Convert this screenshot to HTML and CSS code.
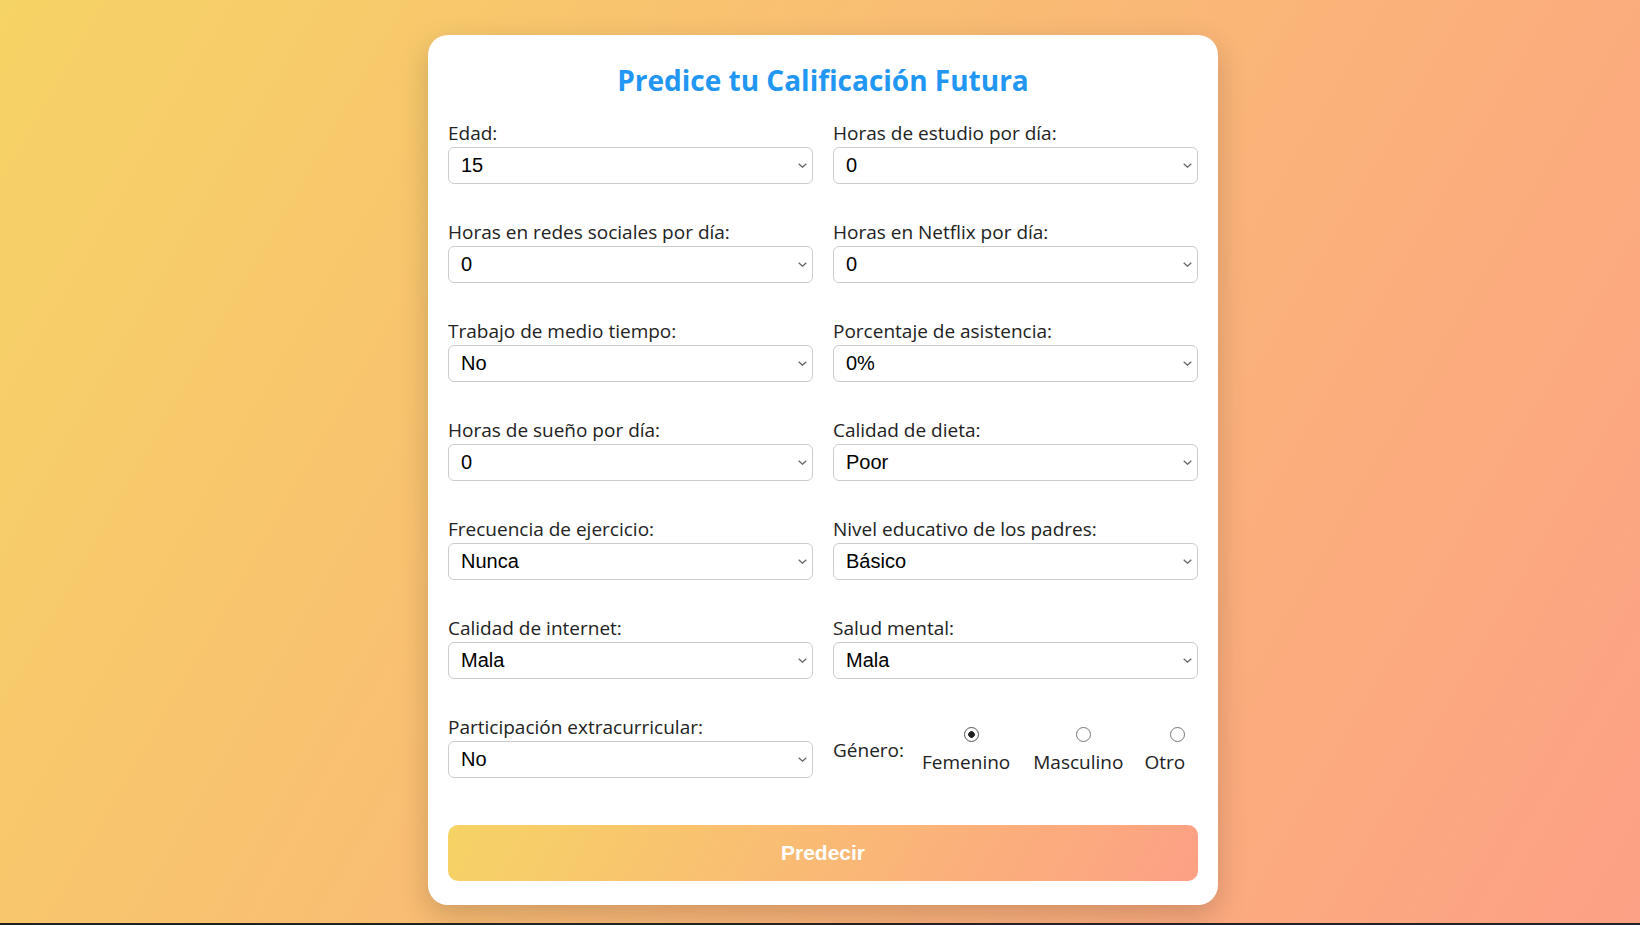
FILE: index.html
```html
<!DOCTYPE html>
<html lang="es">
<head>
<meta charset="utf-8">
<title>Predice tu Calificación Futura</title>
<link rel="stylesheet" href="styles.css">
</head>
<body>
<div class="page">
  <form class="card">
    <h1 class="title">Predice tu Calificación Futura</h1>
    <div class="grid">
      <div class="field">
        <label class="lbl" for="edad">Edad:</label>
        <select id="edad" class="sel"><option>15</option><option>16</option><option>17</option><option>18</option><option>19</option><option>20</option></select>
      </div>
      <div class="field">
        <label class="lbl" for="estudio">Horas de estudio por día:</label>
        <select id="estudio" class="sel"><option>0</option><option>1</option><option>2</option><option>3</option></select>
      </div>
      <div class="field">
        <label class="lbl" for="redes">Horas en redes sociales por día:</label>
        <select id="redes" class="sel"><option>0</option><option>1</option><option>2</option></select>
      </div>
      <div class="field">
        <label class="lbl" for="netflix">Horas en Netflix por día:</label>
        <select id="netflix" class="sel"><option>0</option><option>1</option><option>2</option></select>
      </div>
      <div class="field">
        <label class="lbl" for="trabajo">Trabajo de medio tiempo:</label>
        <select id="trabajo" class="sel"><option>No</option><option>Sí</option></select>
      </div>
      <div class="field">
        <label class="lbl" for="asistencia">Porcentaje de asistencia:</label>
        <select id="asistencia" class="sel"><option>0%</option><option>50%</option><option>100%</option></select>
      </div>
      <div class="field">
        <label class="lbl" for="sueno">Horas de sueño por día:</label>
        <select id="sueno" class="sel"><option>0</option><option>4</option><option>8</option></select>
      </div>
      <div class="field">
        <label class="lbl" for="dieta">Calidad de dieta:</label>
        <select id="dieta" class="sel"><option>Poor</option><option>Fair</option><option>Good</option></select>
      </div>
      <div class="field">
        <label class="lbl" for="ejercicio">Frecuencia de ejercicio:</label>
        <select id="ejercicio" class="sel"><option>Nunca</option><option>A veces</option><option>Siempre</option></select>
      </div>
      <div class="field">
        <label class="lbl" for="padres">Nivel educativo de los padres:</label>
        <select id="padres" class="sel"><option>Básico</option><option>Medio</option><option>Superior</option></select>
      </div>
      <div class="field">
        <label class="lbl" for="internet">Calidad de internet:</label>
        <select id="internet" class="sel"><option>Mala</option><option>Regular</option><option>Buena</option></select>
      </div>
      <div class="field">
        <label class="lbl" for="mental">Salud mental:</label>
        <select id="mental" class="sel"><option>Mala</option><option>Regular</option><option>Buena</option></select>
      </div>
      <div class="field">
        <label class="lbl" for="extra">Participación extracurricular:</label>
        <select id="extra" class="sel"><option>No</option><option>Sí</option></select>
      </div>
      <div class="gender">
        <span class="gender-lbl">Género:</span>
        <label class="opt opt-fem"><input type="radio" name="genero" class="radio" checked><span>Femenino</span></label>
        <label class="opt opt-masc"><input type="radio" name="genero" class="radio"><span>Masculino</span></label>
        <label class="opt opt-otro"><input type="radio" name="genero" class="radio"><span>Otro</span></label>
      </div>
    </div>
    <button type="button" class="btn">Predecir</button>
  </form>
</div>
</body>
</html>
```

FILE: styles.css
```css
html {
  background: #222;
}
* {
  box-sizing: border-box;
}
body {
  margin: 0;
  min-height: calc(100vh - 2px);
  background: linear-gradient(120deg, #f6d365 0%, #fda085 100%);
  font-family: "Open Sans", "Noto Sans", sans-serif;
  color: #222;
}
.page {
  display: flex;
  justify-content: center;
  padding: 35px 0 0 6px;
}
.card {
  width: 790px;
  background: #fff;
  border-radius: 20px;
  padding: 26px 20px 24px;
  box-shadow: 0 10px 30px rgba(0, 0, 0, 0.18);
}
.title {
  margin: 2px 0 23px;
  text-align: center;
  color: #2196f3;
  font-size: 28px;
  font-weight: 700;
  line-height: 35px;
}
.grid {
  display: grid;
  grid-template-columns: 1fr 1fr;
  column-gap: 20px;
  row-gap: 36px;
}
.field {
  display: flex;
  flex-direction: column;
}
.lbl {
  display: block;
  font-size: 19px;
  line-height: 24px;
  margin-bottom: 2px;
}
.sel {
  -webkit-appearance: none;
  appearance: none;
  height: 37px;
  width: 100%;
  border: 1px solid #ccc;
  border-radius: 6px;
  padding: 0 10px 2px 12px;
  font-family: "Liberation Sans", Arial, sans-serif;
  font-size: 20px;
  color: #000;
  background: #fff url("data:image/svg+xml;utf8,<svg xmlns='http://www.w3.org/2000/svg' width='9' height='5' viewBox='0 0 9 5'><path d='M0.7 0.7l3.8 3.5 3.8-3.5' fill='none' stroke='%23666' stroke-width='1.3'/></svg>") no-repeat right 5px center;
  background-size: 9px 5px;
}
.gender {
  display: flex;
  align-items: center;
  padding-top: 7px;
  font-size: 19px;
  line-height: 24px;
}
.gender-lbl {
  margin-right: 18px;
}
.opt {
  display: flex;
  flex-direction: column;
  align-items: flex-start;
}
.opt-fem { margin-right: 23px; }
.opt-masc { margin-right: 21px; }
.radio {
  -webkit-appearance: none;
  appearance: none;
  width: 15px;
  height: 15px;
  margin: 0 0 8px;
  border: 1.5px solid #767676;
  border-radius: 50%;
  background: #fff;
}
.radio:checked {
  border-color: #555;
  background: radial-gradient(circle, #222 0 3px, #fff 3.6px);
}
.opt-fem .radio { margin-left: 42px; }
.opt-masc .radio { margin-left: 43px; }
.opt-otro .radio { margin-left: 26px; }
.btn {
  display: block;
  width: 100%;
  height: 56px;
  margin-top: 47px;
  border: 0;
  border-radius: 10px;
  background: linear-gradient(120deg, #f6d365 0%, #fda085 100%);
  color: #fff;
  font-family: "Liberation Sans", Arial, sans-serif;
  font-weight: 700;
  font-size: 21px;
}
```
